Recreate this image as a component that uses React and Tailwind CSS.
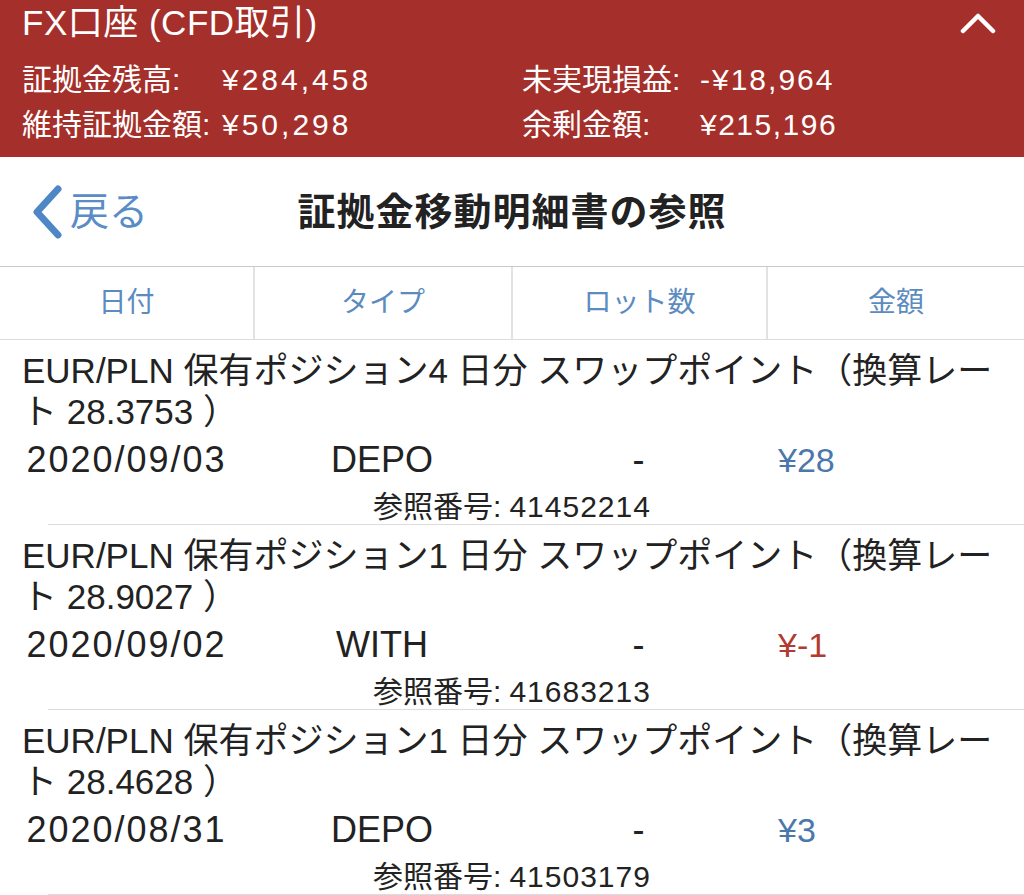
import React from "react";

const FONT = { fontFamily: '"Liberation Sans", "Noto Sans CJK JP", sans-serif' };

const items = [
  { l1: "EUR/PLN 保有ポジション4 日分 スワップポイント（換算レー", l2: "ト 28.3753 ）", date: "2020/09/03", type: "DEPO", amount: "¥28", neg: false, ref: "41452214" },
  { l1: "EUR/PLN 保有ポジション1 日分 スワップポイント（換算レー", l2: "ト 28.9027 ）", date: "2020/09/02", type: "WITH", amount: "¥-1", neg: true, ref: "41683213" },
  { l1: "EUR/PLN 保有ポジション1 日分 スワップポイント（換算レー", l2: "ト 28.4628 ）", date: "2020/08/31", type: "DEPO", amount: "¥3", neg: false, ref: "41503179" },
];

export default function App() {
  return (
    <div className="w-[1024px] h-[895px] overflow-hidden bg-white" style={FONT}>
      {/* Red account header */}
      <div className="bg-[#a52f2a] text-white px-[22px] pb-[10px]">
        <div className="h-[44px] flex items-center justify-between">
          <span className="text-[35px] leading-none tracking-[0.5px]">FX口座 (CFD取引)</span>
          <svg width="36" height="22" viewBox="0 0 36 22" className="mr-[6px] mt-[2px]">
            <polyline points="3,19 18,4 33,19" fill="none" stroke="white" strokeWidth="4.5" strokeLinecap="round" strokeLinejoin="round" />
          </svg>
        </div>
        <div className="mt-[13px] grid grid-cols-2 text-[30px] leading-[45px]">
          <div className="flex flex-col">
            <div className="flex"><span className="w-[200px]">証拠金残高:</span><span className="tracking-[3px]">¥284,458</span></div>
            <div className="flex"><span className="w-[200px]">維持証拠金額:</span><span className="tracking-[3px]">¥50,298</span></div>
          </div>
          <div className="flex flex-col pl-[10px]">
            <div className="flex"><span className="w-[178px]">未実現損益:</span><span className="tracking-[2px]">-¥18,964</span></div>
            <div className="flex"><span className="w-[178px]">余剰金額:</span><span className="tracking-[1.5px]">¥215,196</span></div>
          </div>
        </div>
      </div>

      {/* Nav bar */}
      <div className="h-[110px] grid grid-cols-[1fr_auto_1fr] items-center border-b border-[#c9c9c9]">
        <div className="flex items-center pl-[30px] text-[#5a8cc7]">
          <svg width="34" height="54" viewBox="0 0 34 54">
            <polyline points="28,4 7,27 28,50" fill="none" stroke="#4f86c6" strokeWidth="7" strokeLinecap="round" strokeLinejoin="round" />
          </svg>
          <span className="ml-[6px] text-[39px] leading-none">戻る</span>
        </div>
        <div className="text-[38px] font-bold text-[#222] tracking-[1px] leading-none">証拠金移動明細書の参照</div>
        <div />
      </div>

      {/* Column headers */}
      <div className="h-[73px] grid grid-cols-[253px_258px_255px_1fr] border-b border-[#dcdcdc] text-[28px] text-[#5b8bbf]">
        <div className="flex items-center justify-center">日付</div>
        <div className="flex items-center justify-center border-l-2 border-[#e2e2e2]">タイプ</div>
        <div className="flex items-center justify-center border-l-2 border-[#e2e2e2]">ロット数</div>
        <div className="flex items-center justify-center border-l-2 border-[#e2e2e2]">金額</div>
      </div>

      {/* Items */}
      {items.map((it, i) => (
        <div key={i}>
          <div className="pt-[10px]">
            <div className="px-[22px] text-[35px] leading-[41px] text-[#222] whitespace-nowrap">
              {it.l1}
              <br />
              {it.l2}
            </div>
            <div className="h-[56px] grid grid-cols-[253px_258px_255px_1fr] items-center text-[36px] text-[#222]">
              <div className="text-center tracking-[2px]">{it.date}</div>
              <div className="text-center">{it.type}</div>
              <div className="text-center">-</div>
              <div className={"pl-[12px] text-[34px] " + (it.neg ? "text-[#b23a30]" : "text-[#4b78ab]")}>{it.amount}</div>
            </div>
            <div className="h-[36px] flex items-center justify-center text-[30px] text-[#222]">
              参照番号: <span className="ml-[8px] tracking-[1px]">{it.ref}</span>
            </div>
          </div>
          <div className="ml-[48px] border-t border-[#dcdcdc]" />
        </div>
      ))}
    </div>
  );
}
